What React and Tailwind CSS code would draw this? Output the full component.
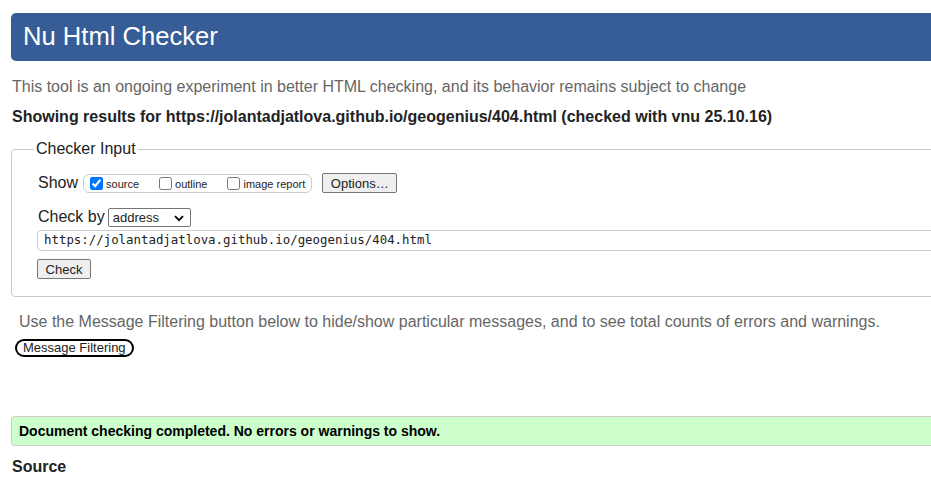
export default function App() {
  return (
    <div className="w-[931px] h-[489px] overflow-hidden bg-white text-[#222] font-['Liberation_Sans',Arial,sans-serif]">
      <div className="w-[1100px] px-[11px] pt-[13px]">
        {/* Title bar */}
        <div className="h-[48px] flex items-center pl-[12px] rounded-[5px] bg-[#365d95]">
          <h1 className="text-[25.6px] leading-none text-white">Nu Html Checker</h1>
        </div>

        <p className="mt-[17px] ml-px text-[16px] leading-[18px] text-[#666]">
          This tool is an ongoing experiment in better HTML checking, and its behavior remains subject to change
        </p>
        <p className="mt-[12px] ml-px text-[16px] leading-[18px] font-bold">
          Showing results for https://jolantadjatlova.github.io/geogenius/404.html (checked with vnu 25.10.16)
        </p>

        {/* Checker input */}
        <fieldset className="mt-[14px] border border-[#c8c8c8] rounded-[4px] pb-[15px]">
          <legend className="ml-[22px] px-[2px] text-[16px] leading-[18px]">Checker Input</legend>
          <div className="pl-[26px] pt-[15px]">
            <div className="flex items-center h-[20px]">
              <span className="text-[16px] leading-[18px]">Show</span>
              <div className="ml-[5px] h-[19px] flex items-center border border-[#ccc] rounded-[6px] pl-[6px] pr-[6px]">
                <label className="flex items-center">
                  <input type="checkbox" defaultChecked className="m-0 w-[13px] h-[13px]" />
                  <span className="ml-[3px] text-[11px] leading-[13px] mt-[2px]">source</span>
                </label>
                <label className="flex items-center ml-[20px]">
                  <input type="checkbox" className="m-0 w-[13px] h-[13px]" />
                  <span className="ml-[3px] text-[11px] leading-[13px] mt-[2px]">outline</span>
                </label>
                <label className="flex items-center ml-[20px]">
                  <input type="checkbox" className="m-0 w-[13px] h-[13px]" />
                  <span className="ml-[3px] text-[11px] leading-[13px] mt-[2px]">image report</span>
                </label>
              </div>
              <button className="ml-[10px] w-[75px] h-[20px] border border-[#767676] rounded-[2px] bg-[#efefef] text-[13px] leading-none">
                Options…
              </button>
            </div>

            <div className="mt-[14px] flex items-center h-[20px]">
              <span className="text-[16px] leading-[18px]">Check by</span>
              <div className="ml-[3px] relative w-[83px] h-[19px] border border-[#767676] rounded-[2px] bg-white flex items-center pl-[4px]">
                <span className="text-[13px] leading-none">address</span>
                <svg className="absolute right-[6px] top-[6px]" width="10" height="7" viewBox="0 0 10 7">
                  <path d="M1 1.2 L5 5.2 L9 1.2" fill="none" stroke="#000" strokeWidth="1.8" />
                </svg>
              </div>
            </div>

            <div className="mt-[3px] -ml-px h-[21px] border border-[#ccc] rounded-[4px] flex items-center pl-[6px]">
              <span className="text-[12.4px] leading-none font-['DejaVu_Sans_Mono',monospace]">
                https://jolantadjatlova.github.io/geogenius/404.html
              </span>
            </div>

            <button className="mt-[8px] -ml-px w-[54px] h-[20px] border border-[#767676] rounded-[2px] bg-[#efefef] text-[13px] leading-none">
              Check
            </button>
          </div>
        </fieldset>

        <p className="mt-[16px] ml-[8px] text-[16px] leading-[18px] text-[#666]">
          Use the Message Filtering button below to hide/show particular messages, and to see total counts of errors and warnings.
        </p>
        <button className="mt-[8px] ml-[4px] h-[18px] px-[6px] border-2 border-black rounded-full bg-white text-[13px] leading-none">
          Message Filtering
        </button>

        <div className="mt-[57px] h-[30px] flex items-center pl-[7px] border border-[#ccc] rounded-[3px] bg-[#ccffcc]">
          <span className="text-[14px] font-bold text-black">Document checking completed. No errors or warnings to show.</span>
        </div>

        <h2 className="mt-[12px] ml-px text-[16px] leading-[18px] font-bold">Source</h2>
      </div>
    </div>
  );
}
